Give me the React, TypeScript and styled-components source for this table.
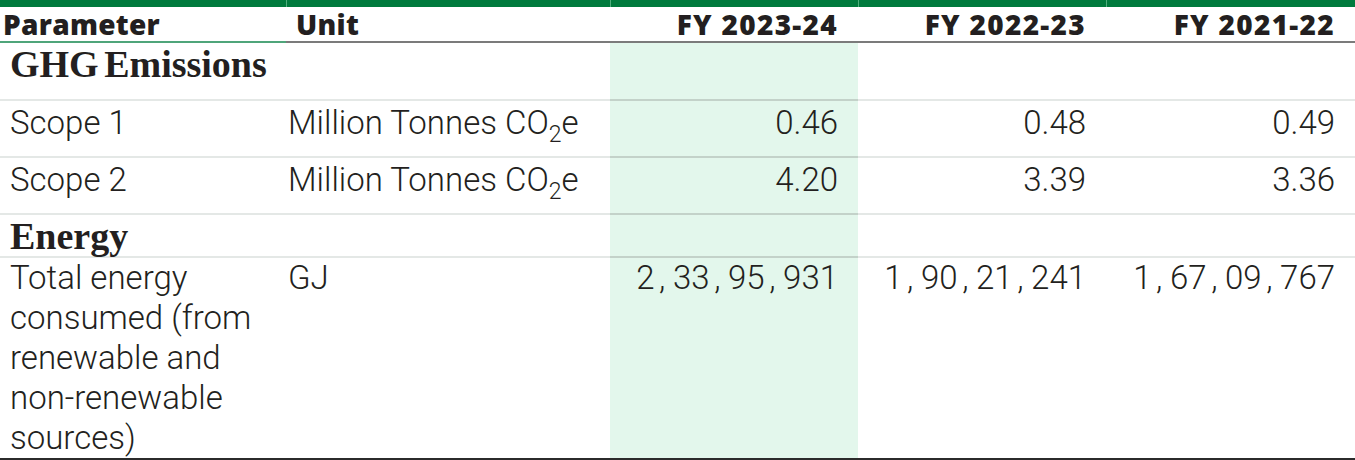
import React from 'react';
import styled, {createGlobalStyle} from "styled-components";

const GlobalStyle = createGlobalStyle`
  html, body {
    margin: 0;
    padding: 0;
    background: #ffffff;
  }
`

const Table = styled.table`
  width: 1355px;
  table-layout: fixed;
  border-collapse: separate;
  border-spacing: 0;
  color: #231f20;
`

const Col = styled.col<{ $w: number }>`
  width: ${p => p.$w}px;
`

const Tr = styled.tr<{ $h: number }>`
  height: ${p => p.$h}px;
`

const HeadCell = styled.th<{ $first?: boolean; $unit?: boolean; $num?: boolean }>`
  height: 34px;
  padding: 7px ${p => p.$num ? "20px" : "0"} 0 ${p => p.$first ? "3px" : p.$unit ? "10px" : "0"};
  text-align: ${p => p.$num ? "right" : "left"};
  font-family: "Open Sans", sans-serif;
  font-weight: 800;
  font-size: 28px;
  letter-spacing: ${p => p.$num ? "1.3px" : "0.3px"};
  line-height: 34px;
  white-space: nowrap;
  background: ${p => p.$first
          ? "linear-gradient(#007a3d, #007a3d)"
          : "linear-gradient(to right, #4fae7c 1px, #007a3d 1px)"} top left / 100% 7px no-repeat;
  border-bottom: 2px solid ${p => p.$first ? "#4fa57a" : "#7b7b7b"};
`

const SectionCell = styled.td`
  vertical-align: top;
  padding: 1px 0 0 10px;
  font-family: "Liberation Serif", serif;
  font-weight: 700;
  font-size: 38px;
  line-height: 40px;
  word-spacing: -4px;
  border-bottom: 2px solid #e4e8e6;
`

const Cell = styled.td<{ $first?: boolean; $unit?: boolean; $num?: boolean; $hl?: boolean; $last?: boolean; $wrap?: boolean }>`
  vertical-align: top;
  padding: ${p => p.$last ? "0" : "2px"} ${p => p.$num ? "20px" : p.$wrap ? "26px" : "0"} 0 ${p => p.$first ? "10px" : p.$unit ? "2px" : "0"};
  text-align: ${p => p.$num ? "right" : "left"};
  font-family: Roboto, sans-serif;
  font-weight: 300;
  font-size: 33px;
  line-height: 40px;
  white-space: ${p => p.$wrap ? "normal" : "nowrap"};
  background: ${p => p.$hl ? "#e3f7ec" : "transparent"};
  border-bottom: ${p => p.$last ? "3px solid #2b2b2b" : `2px solid ${p.$hl ? "#c3d2c9" : "#e4e8e6"}`};
`

const Sub = styled.sub`
  font-size: 23px;
  line-height: 0;
  vertical-align: -8px;
`

const Comma = styled.span`
  display: inline-block;
  width: 0.56em;
  padding-left: 0.14em;
  box-sizing: border-box;
  text-align: left;
`

type Row = {
    param: string;
    unit: React.ReactNode;
    values: string[];
};

const Co2Unit = () => <>Million Tonnes CO<Sub>2</Sub>e</>;

const Num = ({value}: { value: string }) => (
    <>
        {value.split(",").map((part, i) => (
            <React.Fragment key={i}>
                {i > 0 && <Comma>,</Comma>}
                {part}
            </React.Fragment>
        ))}
    </>
);

const ghg: Row[] = [
    {param: "Scope 1", unit: <Co2Unit/>, values: ["0.46", "0.48", "0.49"]},
    {param: "Scope 2", unit: <Co2Unit/>, values: ["4.20", "3.39", "3.36"]},
];

const energy: Row[] = [
    {
        param: "Total energy consumed (from renewable and non-renewable sources)",
        unit: "GJ",
        values: ["2,33,95,931", "1,90,21,241", "1,67,09,767"],
    },
];

const years = ["FY 2023-24", "FY 2022-23", "FY 2021-22"];
const widths = [286, 324, 248, 248, 249];

const SectionRow = ({title, height}: { title: string; height: number }) => (
    <Tr $h={height}>
        <SectionCell colSpan={2}>{title}</SectionCell>
        <Cell $hl $num/>
        <Cell $num/>
        <Cell $num/>
    </Tr>
);

const DataRow = ({row, height, last}: { row: Row; height: number; last?: boolean }) => (
    <Tr $h={height}>
        <Cell $first $last={last} $wrap>{row.param}</Cell>
        <Cell $unit $last={last}>{row.unit}</Cell>
        {row.values.map((v, i) => (
            <Cell key={i} $num $hl={i === 0} $last={last}><Num value={v}/></Cell>
        ))}
    </Tr>
);

export default function App() {
    return (
        <>
            <GlobalStyle/>
            <Table>
                <colgroup>
                    {widths.map((w, i) => <Col key={i} $w={w}/>)}
                </colgroup>
                <thead>
                <tr>
                    <HeadCell $first>Parameter</HeadCell>
                    <HeadCell $unit>Unit</HeadCell>
                    {years.map(y => <HeadCell key={y} $num>{y}</HeadCell>)}
                </tr>
                </thead>
                <tbody>
                <SectionRow title="GHG Emissions" height={58}/>
                {ghg.map(r => <DataRow key={r.param} row={r} height={57}/>)}
                <SectionRow title="Energy" height={43}/>
                {energy.map(r => <DataRow key={r.param} row={r} height={200} last/>)}
                </tbody>
            </Table>
        </>
    );
}
